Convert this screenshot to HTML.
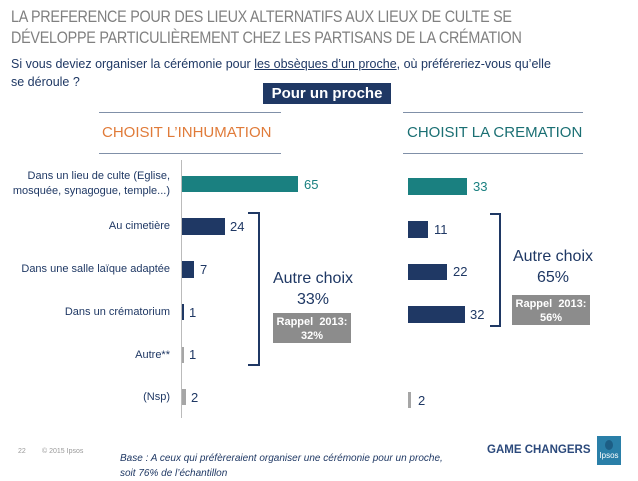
<!DOCTYPE html>
<html><head><meta charset="utf-8"><style>
body{margin:0;width:638px;height:478px;position:relative;background:#fff;font-family:"Liberation Sans",sans-serif;overflow:hidden}
.a{position:absolute;white-space:nowrap}
.t{color:#808080;font-size:16.5px;left:11px;letter-spacing:-0.3px;transform:scaleX(0.87);transform-origin:0 0}
.q{color:#1f3864;font-size:12.5px;left:11px}
.lab{color:#1f3864;font-size:11px;right:468px;text-align:right;line-height:15px}
.n{font-size:13px;color:#1f3864}
.b{position:absolute;background:#1f3864}
.tl{background:#1a8080}
.g{background:#a6a6a6}
.hl{position:absolute;height:1px;background:#8090a8}
.box{position:absolute;background:#8c8c8c;color:#fff;font-weight:bold;font-size:11px;text-align:center;line-height:14px;padding-top:2px}
.ac{color:#1f3864;font-size:16px;text-align:center;line-height:21px}
</style></head><body>
<div class="a t" style="top:8px">LA PREFERENCE POUR DES LIEUX ALTERNATIFS AUX LIEUX DE CULTE SE</div>
<div class="a t" style="top:29px">DÉVELOPPE PARTICULIÈREMENT CHEZ LES PARTISANS DE LA CRÉMATION</div>
<div class="a q" style="top:57px">Si vous deviez organiser la cérémonie pour <u>les obsèques d’un proche</u>, où préféreriez-vous qu’elle</div>
<div class="a q" style="top:75px">se déroule ?</div>
<div class="a" style="left:263px;top:83px;width:128px;height:21px;background:#1f3864;color:#fff;font-weight:bold;font-size:15px;text-align:center;line-height:21px">Pour un proche</div>
<div class="hl" style="left:99px;top:112px;width:182px"></div>
<div class="hl" style="left:99px;top:153px;width:182px"></div>
<div class="hl" style="left:403px;top:112px;width:180px"></div>
<div class="hl" style="left:403px;top:153px;width:180px"></div>
<div class="a" style="left:102px;top:124px;color:#e07b39;font-size:15px">CHOISIT L’INHUMATION</div>
<div class="a" style="left:407px;top:124px;color:#1a6f73;font-size:15px">CHOISIT LA CREMATION</div>

<div class="a lab" style="top:169px">Dans un lieu de culte (Eglise,<br>mosquée, synagogue, temple...)</div>
<div class="a lab" style="top:219px">Au cimetière</div>
<div class="a lab" style="top:262px">Dans une salle laïque adaptée</div>
<div class="a lab" style="top:305px">Dans un crématorium</div>
<div class="a lab" style="top:348px">Autre**</div>
<div class="a lab" style="top:390px">(Nsp)</div>

<div class="a" style="left:181px;top:160px;width:1px;height:258px;background:#bbb"></div>
<div class="b tl" style="left:182px;top:176px;width:116px;height:16px"></div>
<div class="a n" style="left:304px;top:177px;color:#1a8080">65</div>
<div class="b" style="left:182px;top:218px;width:43px;height:17px"></div>
<div class="a n" style="left:230px;top:219px">24</div>
<div class="b" style="left:182px;top:261px;width:12px;height:17px"></div>
<div class="a n" style="left:200px;top:262px">7</div>
<div class="b" style="left:182px;top:304px;width:2px;height:16px"></div>
<div class="a n" style="left:189px;top:305px">1</div>
<div class="b g" style="left:182px;top:347px;width:2px;height:16px"></div>
<div class="a n" style="left:189px;top:347px">1</div>
<div class="b g" style="left:182px;top:389px;width:4px;height:16px"></div>
<div class="a n" style="left:191px;top:390px">2</div>

<div class="a" style="left:248px;top:212px;width:10px;height:150px;border:2px solid #1f3864;border-left:none"></div>
<div class="a ac" style="left:263px;top:268px;width:100px">Autre choix<br>33%</div>
<div class="box" style="left:273px;top:313px;width:78px;height:28px">Rappel &nbsp;2013:<br>32%</div>

<div class="b tl" style="left:408px;top:178px;width:59px;height:17px"></div>
<div class="a n" style="left:473px;top:179px;color:#1a8080">33</div>
<div class="b" style="left:408px;top:221px;width:20px;height:17px"></div>
<div class="a n" style="left:434px;top:222px">11</div>
<div class="b" style="left:408px;top:264px;width:39px;height:16px"></div>
<div class="a n" style="left:453px;top:264px">22</div>
<div class="b" style="left:408px;top:306px;width:57px;height:17px"></div>
<div class="a n" style="left:470px;top:307px">32</div>
<div class="b g" style="left:408px;top:392px;width:3px;height:16px"></div>
<div class="a n" style="left:418px;top:393px">2</div>

<div class="a" style="left:490px;top:213px;width:9px;height:110px;border:2px solid #1f3864;border-left:none"></div>
<div class="a ac" style="left:503px;top:246px;width:100px">Autre choix<br>65%</div>
<div class="box" style="left:512px;top:295px;width:78px;height:28px">Rappel &nbsp;2013:<br>56%</div>

<div class="a" style="left:18px;top:448px;font-size:7px;color:#999">22</div>
<div class="a" style="left:42px;top:448px;font-size:7px;color:#999">© 2015 Ipsos</div>
<div class="a" style="left:120px;top:451px;font-size:10px;color:#1f3864;font-style:italic;line-height:15px">Base : A ceux qui préfèreraient organiser une cérémonie pour un proche,<br>soit 76% de l’échantillon</div>
<div class="a" style="left:487px;top:444px;font-size:11.5px;font-weight:bold;color:#2c4a7c">GAME CHANGERS</div>
<div class="a" style="left:597px;top:436px;width:24px;height:29px;background:#2a7fa8;color:#fff;font-size:8px;text-align:center"><div style="width:8px;height:10px;background:#1d5e85;border-radius:50%;margin:4px auto 1px"></div>Ipsos</div>
</body></html>
